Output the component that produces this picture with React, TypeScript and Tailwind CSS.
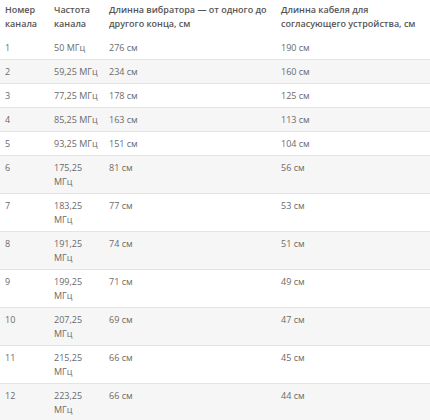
import React from "react";

const rows: [string, string, string, string][] = [
  ["1", "50 МГц", "276 см", "190 см"],
  ["2", "59,25 МГц", "234 см", "160 см"],
  ["3", "77,25 МГц", "178 см", "125 см"],
  ["4", "85,25 МГц", "163 см", "113 см"],
  ["5", "93,25 МГц", "151 см", "104 см"],
  ["6", "175,25 МГц", "81 см", "56 см"],
  ["7", "183,25 МГц", "77 см", "53 см"],
  ["8", "191,25 МГц", "74 см", "51 см"],
  ["9", "199,25 МГц", "71 см", "49 см"],
  ["10", "207,25 МГц", "69 см", "47 см"],
  ["11", "215,25 МГц", "66 см", "45 см"],
  ["12", "223,25 МГц", "66 см", "44 см"],
];

export default function App() {
  return (
    <div
      className="w-[430px] h-[420px] overflow-hidden bg-white text-[9px]"
      style={{ fontFamily: '"Open Sans", "Noto Sans", sans-serif' }}
    >
      <div className="grid grid-cols-[49px_55px_172px_1fr] text-[#555555] font-semibold leading-[14px]">
        <div className="pl-[5px] pr-[2px] pt-[3px] pb-[5px]">Номер канала</div>
        <div className="pl-[5px] pr-[2px] pt-[3px] pb-[5px]">Частота канала</div>
        <div className="pl-[5px] pr-[2px] pt-[3px] pb-[5px]">
          Длинна вибратора — от одного до другого конца, см
        </div>
        <div className="pl-[5px] pr-[2px] pt-[3px] pb-[5px]">
          Длинна кабеля для согласующего устройства, см
        </div>
      </div>
      {rows.map((r, i) => (
        <div
          key={r[0]}
          className={
            "grid grid-cols-[49px_55px_172px_1fr] border-b border-[#e4e4e4] text-[#6a6a6a] leading-[14px] " +
            (i % 2 === 1 ? "bg-[#f6f6f6]" : "bg-white")
          }
        >
          {r.map((c, j) => (
            <div key={j} className="pl-[5px] pr-[2px] pt-[5px] pb-[4px]">
              {c}
            </div>
          ))}
        </div>
      ))}
    </div>
  );
}
